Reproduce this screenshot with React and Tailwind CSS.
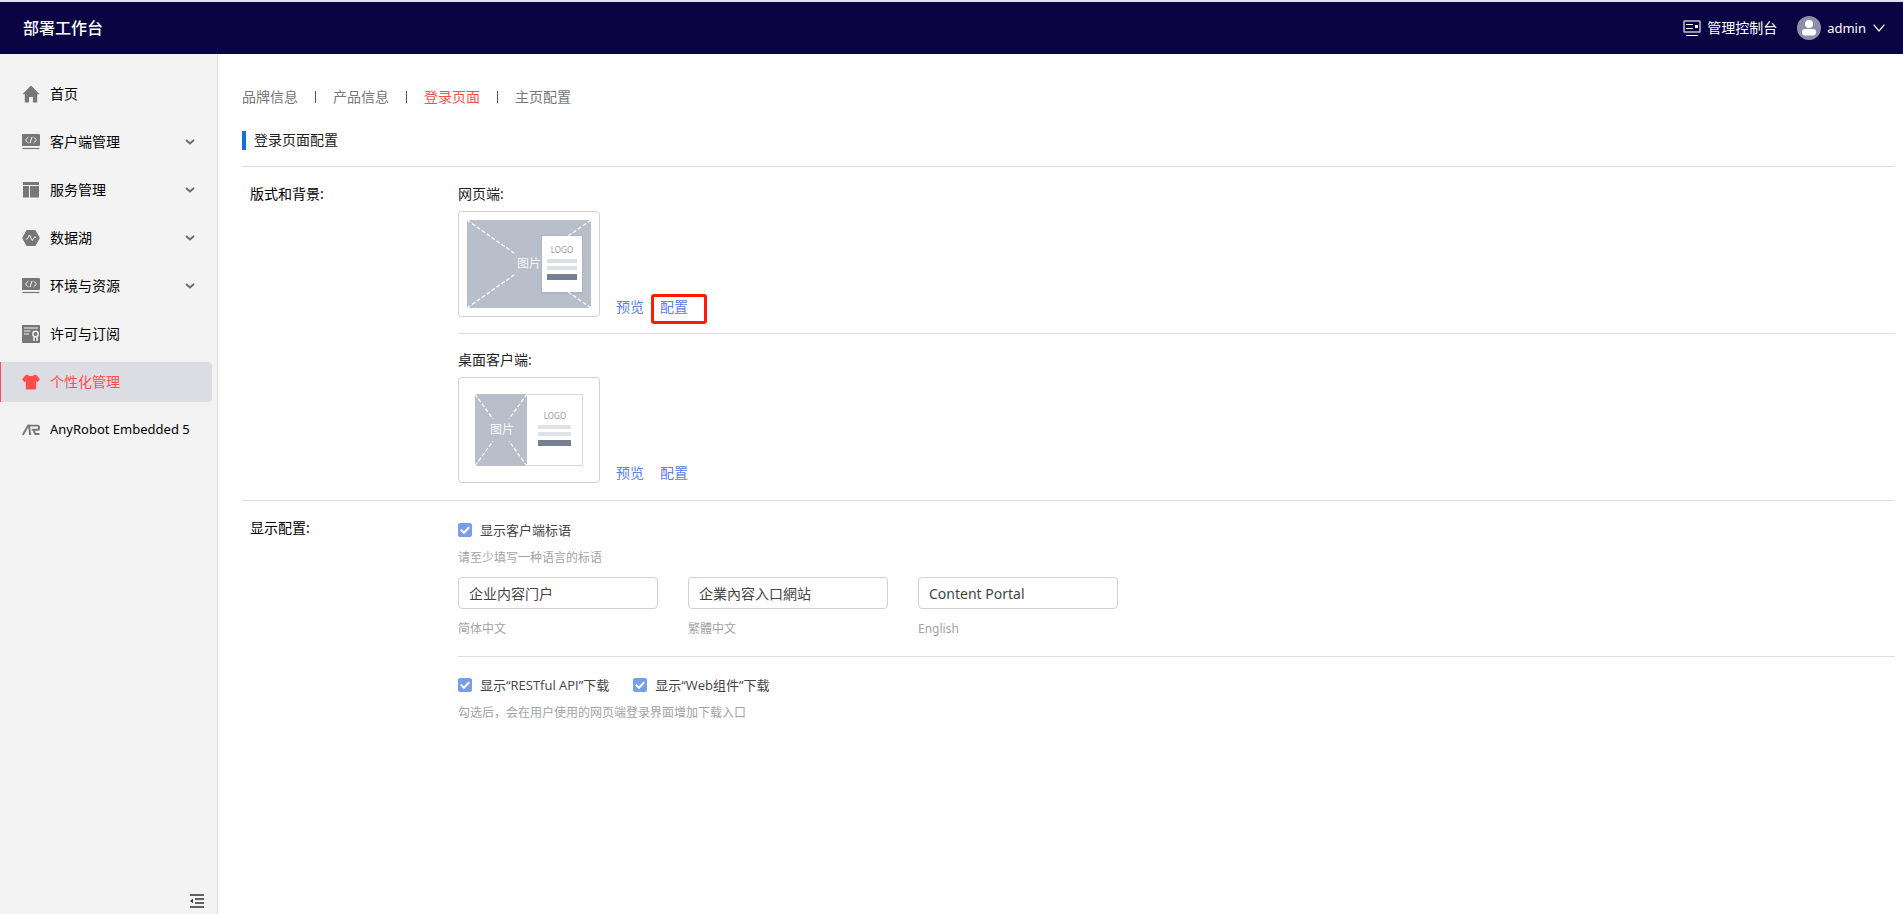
import React, { useState } from 'react';

const HomeIcon = () => (
    <svg className="w-[18px] h-[18px]" viewBox="0 0 18 18" fill="currentColor">
        <path d="M9 0.5 17.6 9.2H15.2V17.5H10.9V12H7.1V17.5H2.8V9.2H0.4Z" />
    </svg>
);

const CodeIcon = () => (
    <svg className="w-[18px] h-[18px]" viewBox="0 0 18 18">
        <rect x="0" y="1" width="18" height="12" rx="1" fill="currentColor" />
        <path d="M0.5 15.5H17.5" stroke="currentColor" strokeWidth="1.2" />
        <path d="M6.5 4 3.4 7 6.5 10M11.5 4 14.6 7 11.5 10M10 3.8 8 10.2" fill="none" stroke="#f3f3f3" strokeWidth="1" />
    </svg>
);

const ServiceIcon = () => (
    <svg className="w-[18px] h-[18px]" viewBox="0 0 18 18" fill="currentColor">
        <path d="M1 1H17V4H1ZM1 5H7V16.5H1ZM8 5H17V16.5H8Z" />
    </svg>
);

const LakeIcon = () => (
    <svg className="w-[18px] h-[18px]" viewBox="0 0 18 18">
        <path d="M5 1.5H13L17.2 9 13 16.5H5L0.8 9Z" fill="currentColor" stroke="currentColor" strokeWidth="1.2" strokeLinejoin="round" />
        <path d="M3.8 10H5.2L7.5 6 10.3 11.6 12.8 7.6 14.2 9.3" fill="none" stroke="#f3f3f3" strokeWidth="1" />
    </svg>
);

const LicenseIcon = () => (
    <svg className="w-[18px] h-[18px]" viewBox="0 0 18 18">
        <rect width="18" height="18" rx="1" fill="currentColor" />
        <path d="M2 3H16M2 6H8.5M2 9H7" fill="none" stroke="#f3f3f3" strokeWidth="1.2" />
        <circle cx="13.5" cy="9" r="2.7" fill="none" stroke="#f3f3f3" strokeWidth="1.4" />
        <path d="M12 11.5V16M15 11.5V16" stroke="#f3f3f3" strokeWidth="1.5" />
    </svg>
);

const ShirtIcon = () => (
    <svg className="w-[18px] h-[18px]" viewBox="0 0 18 18" fill="currentColor">
        <path d="M5.6 1.6C6.6 3.6 11.4 3.6 12.4 1.6L14.6 2.2 18 6.3 15.6 9 14.2 8.2V15.4Q14.2 16.4 13.2 16.4H4.8Q3.8 16.4 3.8 15.4V8.2L2.4 9 0 6.3 3.4 2.2Z" />
    </svg>
);

const RobotIcon = () => (
    <svg className="w-[18px] h-[18px]" viewBox="0 0 18 18" fill="none" stroke="currentColor" strokeWidth="1.9">
        <path d="M0.8 14 6 4.6H7L8.2 14" />
        <path d="M6 4.6H15.4Q17 4.6 17 6.2V7.2Q17 8.8 15.4 8.8H9.8M11.8 10 13.4 13H17.4" />
    </svg>
);

const ConsoleIcon = () => (
    <svg className="w-[18px] h-[18px]" viewBox="0 0 18 18" fill="none" stroke="currentColor">
        <rect x="1" y="2" width="16" height="11" rx="0.5" strokeWidth="1.5" opacity="0.75" />
        <path d="M3 5.5H10M3 9.5H10M3 16.5H15" strokeWidth="1" />
        <path d="M12 6H15V9H12Z" fill="currentColor" stroke="none" />
    </svg>
);

const ChevronIcon = () => (
    <svg className="w-[10px] h-[6px]" viewBox="0 0 10 6" fill="none" stroke="#6b6b6b" strokeWidth="2">
        <path d="M1 1 5 4.4 9 1" />
    </svg>
);

const MENU = [
    { id: 'home', label: '首页', icon: HomeIcon },
    { id: 'client', label: '客户端管理', icon: CodeIcon, expandable: true },
    { id: 'service', label: '服务管理', icon: ServiceIcon, expandable: true },
    { id: 'lake', label: '数据湖', icon: LakeIcon, expandable: true },
    { id: 'env', label: '环境与资源', icon: CodeIcon, expandable: true },
    { id: 'license', label: '许可与订阅', icon: LicenseIcon },
    { id: 'custom', label: '个性化管理', icon: ShirtIcon },
    { id: 'anyrobot', label: 'AnyRobot Embedded 5', icon: RobotIcon, latin: true },
];

const TABS = ['品牌信息', '产品信息', '登录页面', '主页配置'];

const SLOGANS = [
    { id: 'zh-cn', label: '简体中文', value: '企业内容门户' },
    { id: 'zh-tw', label: '繁體中文', value: '企業內容入口網站' },
    { id: 'en-us', label: 'English', value: 'Content Portal' },
];

const WebLayout = () => (
    <svg className="w-[124px] h-[88px]" viewBox="0 0 124 88">
        <rect width="124" height="88" fill="#b8bfca" />
        <path d="M0 0 47 33M124 0 77 33M0 88 47 55M124 88 77 55" stroke="#fff" strokeWidth="1.2" strokeDasharray="4 2" />
        <text x="50" y="48" fontSize="12" fill="#fff" opacity="0.85">图片</text>
        <rect x="74" y="15" width="42" height="59" fill="#000" opacity="0.05" />
        <rect x="75" y="16" width="40" height="56" fill="#fff" />
        <text x="95" y="33" fontSize="8" textAnchor="middle" fill="#999">LOGO</text>
        <path d="M80 39H110V43H80ZM80 46H110V50H80Z" fill="#dcdfe4" />
        <path d="M80 54H110V60H80Z" fill="#758190" />
    </svg>
);

const DesktopLayout = () => (
    <svg className="w-[108px] h-[72px]" viewBox="0 0 108 72">
        <rect x="0.5" y="0.5" width="107" height="71" fill="#fff" stroke="#d9d9d9" />
        <rect width="52" height="72" fill="#b8bfca" />
        <path d="M0 0 18 25M52 0 34 25M0 72 18 47M52 72 34 47" stroke="#fff" strokeWidth="1.2" strokeDasharray="4 2" />
        <text x="27" y="40" fontSize="12" textAnchor="middle" fill="#fff" opacity="0.9">图片</text>
        <text x="80" y="25" fontSize="8" textAnchor="middle" fill="#999">LOGO</text>
        <path d="M63 31H96V35H63ZM63 38H96V42H63Z" fill="#dfe2e7" />
        <path d="M63 46H96V52H63Z" fill="#758090" />
    </svg>
);

const LayoutRow = ({ title, highlight, children }) => (
    <div>
        <div className="text-sm text-[#222]">{title}</div>
        <div className="flex items-end mt-[7px]">
            <div className="flex items-center justify-center w-[142px] h-[106px] border border-[#d0d0d9] rounded">
                {children}
            </div>
            <div className="relative flex gap-4 ml-4 text-sm text-[#5b80ee]">
                <a href="#preview">预览</a>
                <a href="#config">配置</a>
                {highlight && (
                    <span className="absolute left-[35px] -top-[3px] w-14 h-[30px] border-3 border-[#ff1a0d] rounded-[3px] pointer-events-none" />
                )}
            </div>
        </div>
    </div>
);

const Checkbox = ({ label }) => (
    <label className="flex items-center gap-2 text-[13px] leading-5 text-[#444] font-['Open_Sans','Noto_Sans_CJK_SC',sans-serif]">
        <span className="relative flex">
            <input
                type="checkbox"
                defaultChecked
                className="peer appearance-none w-3.5 h-3.5 rounded-xs border border-[#779eea] checked:bg-[#779eea]"
            />
            <svg className="absolute inset-0 w-3.5 h-3.5 hidden peer-checked:block pointer-events-none" viewBox="0 0 14 14" fill="none" stroke="#fff" strokeWidth="2">
                <path d="M2.8 6.6 5.9 9.7 11.2 4.2" />
            </svg>
        </span>
        {label}
    </label>
);

const Header = () => (
    <header className="flex items-center justify-between h-[54px] border-t-2 border-[#e4e4e8] bg-[#0a0542] text-white pl-[23px] pr-[18px]">
        <h1 className="text-base font-medium">部署工作台</h1>
        <div className="flex items-center gap-5">
            <a href="#console" className="flex items-center gap-1.5 text-sm">
                <ConsoleIcon />
                管理控制台
            </a>
            <button type="button" className="flex items-center text-[13px] leading-5">
                <svg className="w-6 h-6 mr-1.5" viewBox="0 0 24 24">
                    <circle cx="12" cy="12" r="12" fill="#8d8fa8" />
                    <circle cx="12" cy="8" r="4" fill="#fff" />
                    <rect x="5" y="13" width="14" height="6.5" rx="3.2" fill="#fff" />
                </svg>
                admin
                <svg className="w-3 h-2 ml-[7px]" viewBox="0 0 12 8" fill="none" stroke="currentColor" strokeWidth="1.2">
                    <path d="M0.6 0.6 6 7 11.4 0.6" />
                </svg>
            </button>
        </div>
    </header>
);

const Sidebar = ({ active, onSelect }) => (
    <aside className="flex flex-col shrink-0 w-[218px] bg-[#f3f3f3] border-r border-[#dcdcdc] pt-5">
        <nav className="flex flex-col gap-2 pr-[5px]">
            {MENU.map(({ id, label, icon: Icon, expandable, latin }) => (
                <button
                    key={id}
                    type="button"
                    onClick={() => onSelect(id)}
                    className={`flex items-center h-10 pl-[21px] pr-[17px] border-l rounded-r ${latin ? 'text-[13px]' : 'text-sm'} ${active === id
                        ? 'border-[#ff4d4f] bg-[#dcdde2] text-[#ff4d4f]'
                        : 'border-transparent text-black'
                        }`}
                >
                    <span className={active === id ? 'text-[#ff4d4f]' : 'text-[#777]'}>
                        <Icon />
                    </span>
                    <span className="flex-1 ml-2.5 text-left whitespace-nowrap">{label}</span>
                    {expandable && <ChevronIcon />}
                </button>
            ))}
        </nav>
        <button type="button" aria-label="收起菜单" className="mt-auto ml-auto mr-3 mb-1.5">
            <svg className="w-4 h-3.5" viewBox="0 0 16 14" fill="none" stroke="#333">
                <path d="M1 1H15M1 13H15" strokeWidth="1.3" />
                <path d="M6 5H15M6 9H15" strokeWidth="1.3" />
                <path d="M1 7 4 4.8V9.2Z" fill="#333" stroke="none" />
            </svg>
        </button>
    </aside>
);

const App = () => {
    const [active, setActive] = useState('custom');
    const [tab, setTab] = useState('登录页面');

    return (
        <div className="flex flex-col min-h-screen bg-white font-['Noto_Sans','Noto_Sans_CJK_SC',sans-serif]">
            <Header />
            <div className="flex flex-1">
                <Sidebar active={active} onSelect={setActive} />

                <main className="flex-1 pl-6 pr-2 pt-8">
                    <div className="flex items-center h-[22px]">
                        {TABS.map((name, i) => (
                            <React.Fragment key={name}>
                                {i > 0 && <span className="w-px h-3 mx-[17px] bg-[#555]" />}
                                <button
                                    type="button"
                                    onClick={() => setTab(name)}
                                    className={`text-sm ${tab === name ? 'text-[#ff4d4f]' : 'text-[#777]'}`}
                                >
                                    {name}
                                </button>
                            </React.Fragment>
                        ))}
                    </div>

                    <h2 className="flex items-center gap-2 h-5 mt-[22px] text-sm text-[#222]">
                        <span className="w-1 h-[19px] bg-[#146fe3]" />
                        登录页面配置
                    </h2>

                    {/* Layout and background */}
                    <section className="flex mt-4 pt-[17px] border-t border-[#dedede]">
                        <h3 className="w-52 shrink-0 ml-2 text-sm text-black">版式和背景:</h3>
                        <div className="flex-1">
                            <div className="pb-4 border-b border-[#dedede]">
                                <LayoutRow title="网页端:" highlight>
                                    <WebLayout />
                                </LayoutRow>
                            </div>
                            <div className="pt-4 pb-[17px]">
                                <LayoutRow title="桌面客户端:">
                                    <DesktopLayout />
                                </LayoutRow>
                            </div>
                        </div>
                    </section>

                    {/* Display options */}
                    <section className="flex pt-[17px] border-t border-[#dedede]">
                        <h3 className="w-52 shrink-0 ml-2 text-sm text-black">显示配置:</h3>
                        <div className="flex-1 pt-0.5">
                            <div className="flex">
                                <Checkbox label="显示客户端标语" />
                            </div>
                            <p className="mt-2 text-xs leading-5 text-[#a3a3a3]">请至少填写一种语言的标语</p>
                            <div className="flex gap-[30px] mt-[9px] pb-[17px] border-b border-[#dedede]">
                                {SLOGANS.map((item) => (
                                    <div key={item.id} className="w-[200px]">
                                        <input
                                            id={item.id}
                                            type="text"
                                            defaultValue={item.value}
                                            className="block w-full h-8 px-2.5 border border-[#d0d0d9] rounded text-sm text-[#444]"
                                        />
                                        <label htmlFor={item.id} className="block mt-2.5 text-xs leading-5 text-[#a3a3a3]">
                                            {item.label}
                                        </label>
                                    </div>
                                ))}
                            </div>
                            <div className="flex gap-6 mt-[18px]">
                                <Checkbox label="显示“RESTful API”下载" />
                                <Checkbox label="显示“Web组件”下载" />
                            </div>
                            <p className="mt-2 text-xs leading-5 text-[#a3a3a3]">勾选后，会在用户使用的网页端登录界面增加下载入口</p>
                        </div>
                    </section>
                </main>
            </div>
        </div>
    );
};

export default App;
